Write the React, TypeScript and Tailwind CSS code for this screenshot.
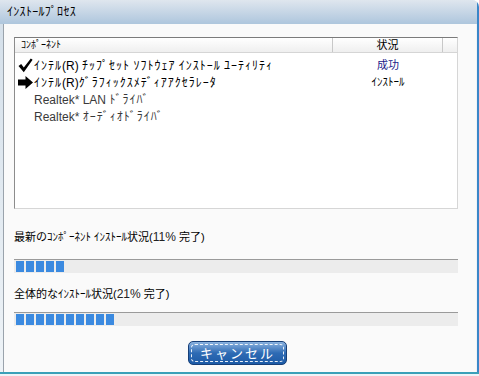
import React from "react";

const FONT = { fontFamily: '"Liberation Sans", "Noto Sans CJK JP", sans-serif' };

function Txt({ text, kana = "tracking-[1px]" }: { text: string; kana?: string }) {
  const parts = text.split(/([\uFF61-\uFF9F]+)/);
  return (
    <>
      {parts.map((p, i) =>
        /^[\uFF61-\uFF9F]+$/.test(p) ? (
          <span key={i} className={kana}>{p}</span>
        ) : (
          <span key={i}>{p}</span>
        )
      )}
    </>
  );
}

function Check() {
  return (
    <svg width="15" height="15" viewBox="0 0 15 15" className="shrink-0">
      <path d="M0.5 8 L3.2 6 L5.8 9.6 L12.8 0.5 L14.6 1.8 L5.8 14.2 Z" fill="#000" />
    </svg>
  );
}

function Arrow() {
  return (
    <svg width="15" height="13" viewBox="0 0 15 13" className="shrink-0">
      <path d="M0 3.5 H7.5 V0 L15 6.5 L7.5 13 V9.5 H0 Z" fill="#000" />
    </svg>
  );
}

function Progress({ blocks }: { blocks: number }) {
  return (
    <div className="h-[14px] bg-[#ececec] border-t border-[#9a9a9a] flex items-stretch gap-[2px] pl-[2px] pt-[1px] pb-[1px]">
      {Array.from({ length: blocks }).map((_, i) => (
        <div key={i} className="w-[8px] bg-[#3b8ae0]" />
      ))}
    </div>
  );
}

export default function App() {
  const rows = [
    { icon: <Check />, text: "ｲﾝﾃﾙ(R) ﾁｯﾌﾟｾｯﾄ ｿﾌﾄｳｪｱ ｲﾝｽﾄｰﾙ ﾕｰﾃｨﾘﾃｨ", status: "成功", statusCls: "text-[#1a1a8a]", cls: "text-black" },
    { icon: <Arrow />, text: "ｲﾝﾃﾙ(R)ｸﾞﾗﾌｨｯｸｽﾒﾃﾞｨｱｱｸｾﾗﾚｰﾀ", status: "ｲﾝｽﾄｰﾙ", statusCls: "text-black", cls: "text-black" },
    { icon: null, text: "Realtek* LAN ﾄﾞﾗｲﾊﾞ", status: "", statusCls: "", cls: "text-[#3a3a3a]" },
    { icon: null, text: "Realtek* ｵｰﾃﾞｨｵﾄﾞﾗｲﾊﾞ", status: "", statusCls: "", cls: "text-[#3a3a3a]" },
  ];
  return (
    <div className="w-[479px] h-[376px] overflow-hidden flex flex-col bg-[#dfe7ef] rounded-tr-[7px]" style={FONT}>
      {/* title bar */}
      <div className="h-[24px] shrink-0 flex items-center pl-[7px] bg-gradient-to-b from-[#dfe6ee] to-[#aec6dd] text-[12px] text-black border-r-2 border-[#3a86c8]">
        <Txt text="ｲﾝｽﾄｰﾙ ﾌﾟﾛｾｽ" kana="tracking-[0.3px]" />
      </div>
      <div className="flex-1 flex min-h-0">
        <div className="w-[3px] bg-gradient-to-b from-[#d5e0ea] to-[#eef3f7]" />
        <div className="flex-1 bg-[#fafafa] border-l border-[#9aa3ac] flex flex-col pl-[10px] pr-[18px] pt-[13px]">
          {/* list */}
          <div className="h-[172px] bg-white border border-t-[#7b7b7b] border-l-[#8c8c8c] border-r-[#d6d6d6] border-b-[#d6d6d6] flex flex-col">
            <div className="h-[15px] flex text-[10px] bg-gradient-to-b from-[#ffffff] to-[#efefef] border-b border-[#d5d5d5]">
              <div className="w-[318px] border-r border-[#c8c8c8] pl-[6px] flex items-center leading-none">ｺﾝﾎﾟｰﾈﾝﾄ</div>
              <div className="w-[110px] border-r border-[#c8c8c8] flex items-center justify-center leading-none text-[11px]">状況</div>
              <div className="flex-1" />
            </div>
            <div className="pt-[4px] flex flex-col">
              {rows.map((r, i) => (
                <div key={i} className="h-[17px] flex items-center">
                  <div className="w-[318px] flex items-center pl-[2px]">
                    <div className="w-[17px] flex items-center justify-center">{r.icon}</div>
                    <span className={`text-[12px] whitespace-nowrap ${r.cls}`}>
                      <Txt text={r.text} />
                    </span>
                  </div>
                  <div className={`w-[110px] text-center text-[11px] ${r.statusCls}`}>{r.status}</div>
                </div>
              ))}
            </div>
          </div>
          <div className="mt-[22px] text-[11px] text-black leading-none whitespace-nowrap">
            最新の<Txt text="ｺﾝﾎﾟｰﾈﾝﾄ ｲﾝｽﾄｰﾙ" kana="" />状況(<span className="text-[12px] text-[#222]">11%</span> 完了)
          </div>
          <div className="mt-[16px]">
            <Progress blocks={5} />
          </div>
          <div className="mt-[15px] text-[11px] text-black leading-none whitespace-nowrap">
            全体的な<Txt text="ｲﾝｽﾄｰﾙ" kana="" />状況(<span className="text-[12px] text-[#222]">21%</span> 完了)
          </div>
          <div className="mt-[12px]">
            <Progress blocks={10} />
          </div>
          <div className="flex justify-center mt-[15px] pl-[3px]">
            <button className="relative w-[99px] h-[24px] rounded-[5px] border border-[#173f78] bg-gradient-to-b from-[#8ab2df] via-[#2e6bb4] to-[#1c5aa6] text-white text-[13px] tracking-[2px] flex items-center justify-center" style={{ fontFamily: '"Noto Sans CJK JP", sans-serif' }}>
              <span className="absolute inset-[2px] rounded-[4px] border border-dashed border-white/90" />
              <span className="relative">キャンセル</span>
            </button>
          </div>
        </div>
        <div className="w-[3px] bg-[#eef3f7] border-r-2 border-[#3a86c8]" />
      </div>
      <div className="h-[4px] shrink-0 bg-[#eef3f7] border-t-2 border-[#3aa0b8]" />
    </div>
  );
}
